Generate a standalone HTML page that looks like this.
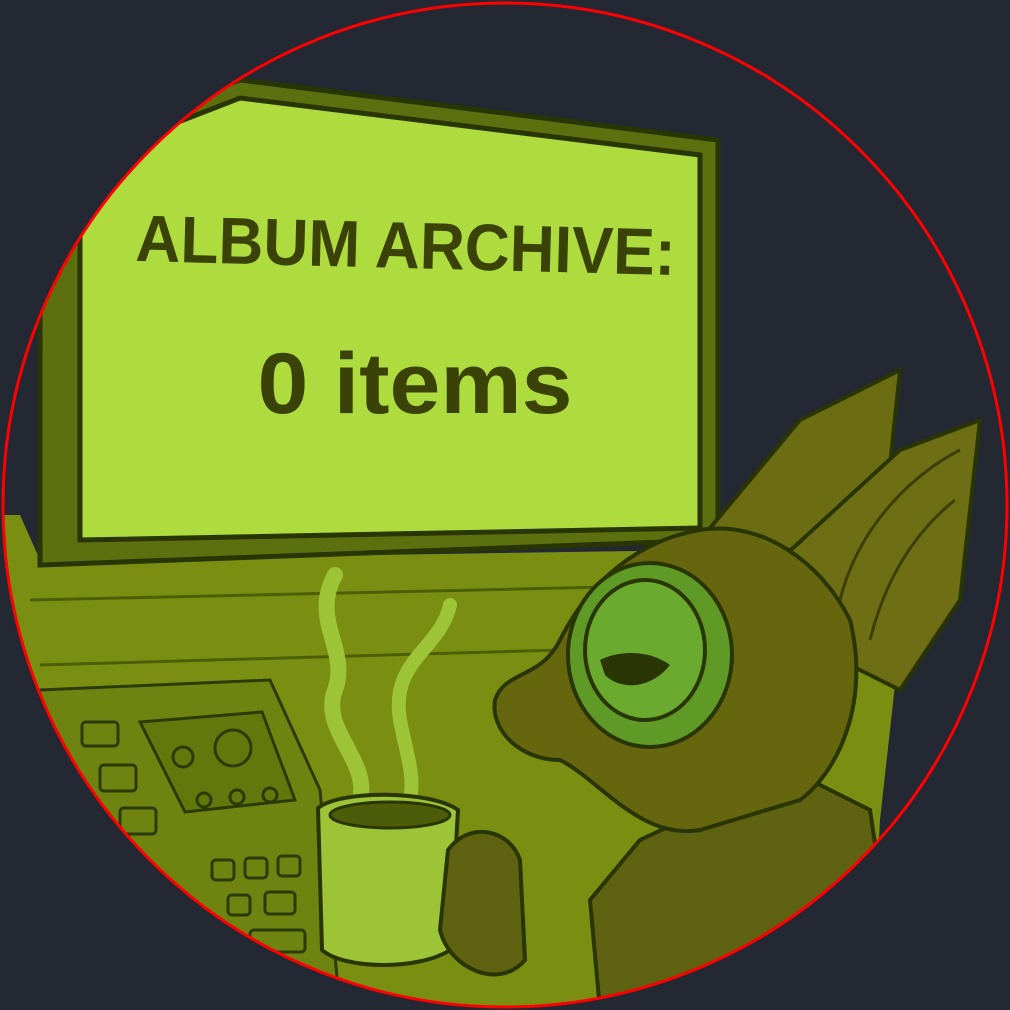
<!DOCTYPE html>
<html><head><style>
html,body{margin:0;padding:0;background:#232833;width:1010px;height:1010px;overflow:hidden}
svg{display:block}
</style></head><body>
<svg width="1010" height="1010" viewBox="0 0 1010 1010" xmlns="http://www.w3.org/2000/svg">
<defs><clipPath id="c"><circle cx="505" cy="505" r="502"/></clipPath></defs>
<rect width="1010" height="1010" fill="#232833"/>
<g clip-path="url(#c)">
 <path d="M0 515 L20 515 L40 560 L700 550 L760 500 L900 640 L880 820 L870 1010 L0 1010Z" fill="#7a8f12"/>
 <path d="M30 600 L700 585 M40 665 L560 650" stroke="#4e5e08" stroke-width="3" fill="none"/>
 <path d="M40 690 L270 680 L320 790 L340 1010 L0 1010 L0 700Z" fill="#6f8410" stroke="#2e3a05" stroke-width="3"/>
 <path d="M140 722 L262 712 L295 800 L185 812Z" fill="#62770c" stroke="#2e3a05" stroke-width="3"/>
 <g fill="none" stroke="#2e3a05" stroke-width="3">
  <rect x="82" y="722" width="36" height="24" rx="4"/><rect x="100" y="765" width="36" height="26" rx="4"/><rect x="120" y="808" width="36" height="26" rx="4"/>
  <circle cx="183" cy="757" r="10"/><circle cx="233" cy="748" r="18"/><circle cx="204" cy="800" r="7"/><circle cx="237" cy="797" r="7"/><circle cx="270" cy="795" r="7"/>
  <rect x="212" y="860" width="22" height="20" rx="4"/><rect x="245" y="858" width="22" height="20" rx="4"/><rect x="278" y="856" width="22" height="20" rx="4"/>
  <rect x="228" y="895" width="22" height="20" rx="4"/><rect x="265" y="892" width="30" height="22" rx="4"/>
  <rect x="250" y="930" width="55" height="22" rx="4"/>
 </g>
 <path d="M40 150 L240 80 L718 140 L718 540 L40 565Z" fill="#5c7010" stroke="#2a3504" stroke-width="5"/>
 <path d="M80 160 L240 98 L700 155 L700 528 L80 540Z" fill="#aedb3e" stroke="#2a3504" stroke-width="5"/>
 <text x="405" y="268" text-anchor="middle" font-family="'Liberation Sans Narrow','Liberation Sans',sans-serif" font-weight="bold" font-size="66" fill="#3a4208" transform="rotate(1.5 405 268)" textLength="540" lengthAdjust="spacingAndGlyphs">ALBUM ARCHIVE:</text>
 <text x="415" y="413" text-anchor="middle" font-family="'Liberation Sans Narrow','Liberation Sans',sans-serif" font-weight="bold" font-size="86" fill="#3a4208" textLength="315" lengthAdjust="spacingAndGlyphs">0 items</text>
 <path d="M335 575 C310 620,350 650,335 690 C320 730,370 760,360 800" stroke="#9cc436" stroke-width="16" fill="none" stroke-linecap="round"/>
 <path d="M450 605 C440 650,390 660,400 720 C410 770,420 790,400 820" stroke="#9cc436" stroke-width="14" fill="none" stroke-linecap="round"/>
 <path d="M318 808 C340 790,430 790,458 810 L450 950 C420 970,345 970,322 950Z" fill="#9cc436" stroke="#2a3504" stroke-width="4"/>
 <ellipse cx="390" cy="815" rx="60" ry="13" fill="#4c5c08" stroke="#2a3504" stroke-width="3"/>
 <path d="M600 1010 L590 900 L640 840 L790 770 L870 810 L900 1010Z" fill="#5f6210" stroke="#2a3504" stroke-width="4"/>
 <path d="M700 540 L800 420 L900 370 L880 560 Z" fill="#6c6c12" stroke="#2a3504" stroke-width="4"/>
 <path d="M780 560 L900 450 L980 420 L960 600 L900 690 L820 650Z" fill="#6e6e14" stroke="#2a3504" stroke-width="4"/>
 <path d="M840 600 C860 520,920 470,960 450" stroke="#3d4006" stroke-width="3" fill="none"/>
 <path d="M870 640 C890 560,930 520,955 500" stroke="#3d4006" stroke-width="3" fill="none"/>
 <path d="M700 530 C760 520,820 560,850 620 C870 700,840 770,800 800 L700 830 C640 840,600 780,560 760 C520 760,490 730,495 700 C505 670,540 680,560 640 C590 580,640 540,700 530Z" fill="#66660f" stroke="#2a3504" stroke-width="4"/>
 <ellipse cx="650" cy="655" rx="82" ry="92" fill="#5f9a26" stroke="#2a3504" stroke-width="4"/>
 <ellipse cx="645" cy="650" rx="60" ry="70" fill="#6aaa2e" stroke="#2a3504" stroke-width="4"/>
 <path d="M600 660 C620 650,650 650,670 665 C650 690,620 690,605 675Z" fill="#2a3504"/>
 <path d="M448 850 C470 820,510 830,520 860 L525 960 C500 990,450 970,440 930Z" fill="#5f6210" stroke="#2a3504" stroke-width="4"/>
</g>
<circle cx="505" cy="505" r="502" fill="none" stroke="#f00" stroke-width="3"/>
</svg>
</body></html>
